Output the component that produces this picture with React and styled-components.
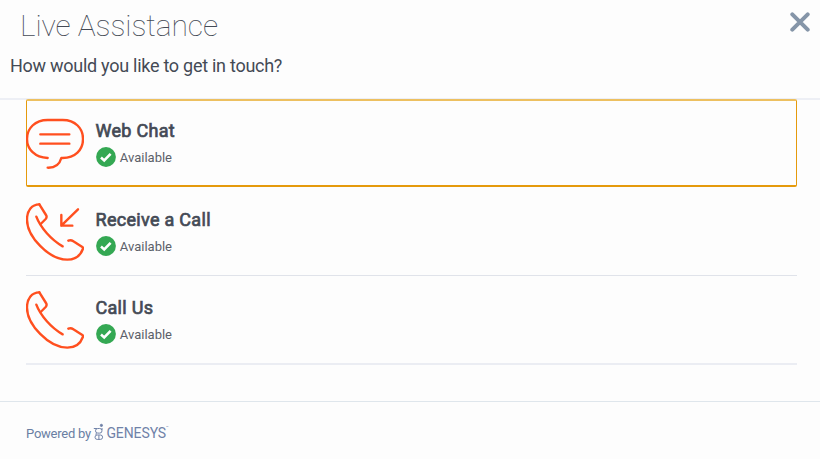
import styled, { createGlobalStyle } from 'styled-components';

const GlobalStyle = createGlobalStyle`
  * {
    box-sizing: border-box;
  }
  body {
    margin: 0;
    background: #fdfdfd;
    font-family: Roboto, sans-serif;
    color: #444a55;
    overflow: hidden;
  }
`;

const Widget = styled.div`
  display: flex;
  flex-direction: column;
  height: 459px;
`;

const Header = styled.header`
  display: flex;
  justify-content: space-between;
  align-items: flex-start;
  height: 100px;
  border-bottom: 2px solid #edeff5;
`;

const Title = styled.h1`
  margin: 7px 0 0 20px;
  font-size: 30px;
  font-weight: 100;
  line-height: 38px;
  letter-spacing: -0.07px;
`;

const Subtitle = styled.p`
  margin: 8px 0 0 10px;
  font-size: 18px;
  line-height: 26px;
  letter-spacing: -0.27px;
`;

const CloseButton = styled.button`
  display: flex;
  margin: 12px 10px 0 0;
  padding: 0;
  border: none;
  background: transparent;
  cursor: pointer;
`;

const Channels = styled.ul`
  position: relative;
  margin: -1px 23px 0 26px;
  padding: 0;
  list-style: none;
`;

const Channel = styled.li`
  display: flex;
  align-items: flex-start;
  gap: 12px;
  height: 89px;
  padding-top: 16px;
  border-bottom: 1px solid #e0e3ea;

  &:last-child {
    padding-top: 15px;
    border-bottom: 2px solid #ebedf3;
  }

  ${({ $focused }) => $focused && `
    height: 88px;
    padding-top: 13px;
    border: solid #e59a0c;
    border-width: 2px 1px;
    border-top-color: #edc060;
    border-radius: 2px;

    & > svg {
      margin-left: -1px;
    }
  `}
`;

const Icon = styled.svg`
  width: 58px;
  height: 58px;
  flex-shrink: 0;
  fill: none;
  stroke: #ff4f1f;
  stroke-width: 7.2;
  stroke-linecap: round;
  stroke-linejoin: round;
`;

const ChannelInfo = styled.div`
  margin-left: -0.5px;
`;

const ChannelName = styled.h2`
  margin: 5px 0 0;
  font-size: 18px;
  font-weight: 400;
  line-height: 24px;
  letter-spacing: 0.3px;
  -webkit-text-stroke: 0.7px currentColor;
`;

const Status = styled.div`
  display: flex;
  align-items: center;
  gap: 4.3px;
  height: 20px;
  margin-top: 4px;
  font-size: 13px;
  color: #5b6069;
`;

const Footer = styled.footer`
  display: flex;
  align-items: center;
  height: 58px;
  margin-top: auto;
  padding: 5px 0 0 26px;
  border-top: 1px solid #dfe6ec;
  font-size: 13px;
  letter-spacing: -0.24px;
  color: #6a7fa3;
`;

const Brand = styled.span`
  display: flex;
  align-items: center;
  margin-left: 2px;
  color: #7082a8;
`;

const BrandName = styled.span`
  margin-left: 2.5px;
  font-size: 14px;
  letter-spacing: -0.1px;
`;

const Handset = () => (
  <>
    <path d="M40 4 L60 36 Q64 42 59 48 L44 63" />
    <path d="M40 4 C18 4 3 22 3 50 C3 100 68 170 124 170 C149 170 164 157 171 137 Q172 134 169 132 L142 115 Q135 110 127 113" />
    <path d="M31 41 C43 73 75 110 110 130" />
  </>
);

const ICONS = {
  chat: (
    <>
      <path d="M65 132 C27 130 3 106 3 75 C3 43 27 18 65 18 H110 C148 18 171 43 171 75 C171 108 147 132 110 132 H106 Q98 162 65 161" />
      <path d="M43 61 H130 M43 89 H130" />
    </>
  ),
  receive: (
    <>
      <Handset />
      <path d="M156 19 L106 68 M106 36 V68 H139" />
    </>
  ),
  call: <Handset />,
};

const CheckBadge = () => (
  <svg width="20" height="20" viewBox="0 0 20 20">
    <circle cx="10" cy="10" r="9.9" fill="#34a853" />
    <path d="M5 10.5 L8.2 13.4 L14.6 6.8" fill="none" stroke="#fff" strokeWidth="2.6" />
  </svg>
);

const CloseIcon = () => (
  <svg width="20" height="20" viewBox="0 0 20 20">
    <path d="M2.3 2.3 L17.7 17.7 M17.7 2.3 L2.3 17.7" stroke="#8595a8" strokeWidth="4" strokeLinecap="round" />
  </svg>
);

const GenesysMark = () => (
  <svg width="11" height="20" viewBox="0 0 11 20" fill="none" stroke="#7082a8" strokeWidth="1">
    <circle cx="8.4" cy="2.4" r="1.1" fill="#7082a8" />
    <path d="M0.8 5.5 H4" />
    <rect x="2.5" y="5.5" width="6.5" height="4.6" rx="2.3" />
    <rect x="2" y="12" width="7.6" height="4.4" rx="2.2" />
    <path d="M9 7 V5 M3.6 10.1 Q2 11 3.4 12 M5.9 12.2 V16.2" />
  </svg>
);

const Trademark = styled.sup`
  align-self: flex-start;
  font-size: 4px;
  line-height: 10px;
`;

const channels = [
  { icon: 'chat', name: 'Web Chat', focused: true },
  { icon: 'receive', name: 'Receive a Call' },
  { icon: 'call', name: 'Call Us' },
];

export default function App() {
  return (
    <>
      <GlobalStyle />
      <Widget>
        <Header>
          <div>
            <Title>Live Assistance</Title>
            <Subtitle>How would you like to get in touch?</Subtitle>
          </div>
          <CloseButton aria-label="Close">
            <CloseIcon />
          </CloseButton>
        </Header>
        <Channels>
          {channels.map(({ icon, name, focused }) => (
            <Channel key={name} $focused={focused}>
              <Icon viewBox="0 0 174 174">{ICONS[icon]}</Icon>
              <ChannelInfo>
                <ChannelName>{name}</ChannelName>
                <Status>
                  <CheckBadge />
                  Available
                </Status>
              </ChannelInfo>
            </Channel>
          ))}
        </Channels>
        <Footer>
          Powered by
          <Brand>
            <GenesysMark />
            <BrandName>GENESYS</BrandName>
            <Trademark>™</Trademark>
          </Brand>
        </Footer>
      </Widget>
    </>
  );
}
